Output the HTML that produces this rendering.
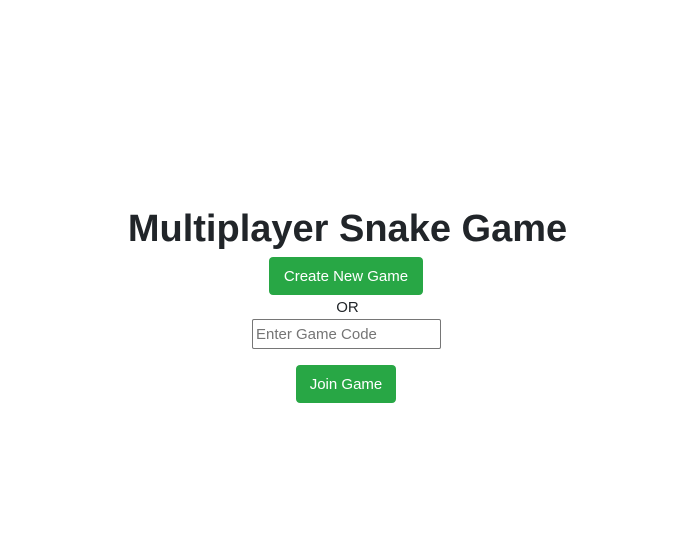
<!DOCTYPE html>
<html><head><style>
body{margin:0;width:695px;height:558px;background:#fff;font-family:"Liberation Sans",sans-serif;color:#212529;position:relative;overflow:hidden}
.a{position:absolute}
h1{position:absolute;left:0;width:695px;top:204px;margin:0;text-align:center;font-weight:bold;font-size:38px;line-height:50px;letter-spacing:0px}
.btn{background:#28a745;color:#fff;border-radius:4px;text-align:center;font-size:15px;line-height:40px;height:38px}
</style></head><body>
<h1>Multiplayer Snake Game</h1>
<div class="a btn" style="left:269px;top:257px;width:154px">Create New Game</div>
<div class="a" style="left:0;width:695px;text-align:center;top:299px;font-size:15px;line-height:18px">OR</div>
<div class="a" style="left:252px;top:319px;border:1px solid #767676;border-radius:2px;font-size:15px;line-height:30px;color:#757575;padding-left:3px;box-sizing:border-box;width:189px;height:30px">Enter Game Code</div>
<div class="a btn" style="left:296px;top:365px;width:100px">Join Game</div>
</body></html>
